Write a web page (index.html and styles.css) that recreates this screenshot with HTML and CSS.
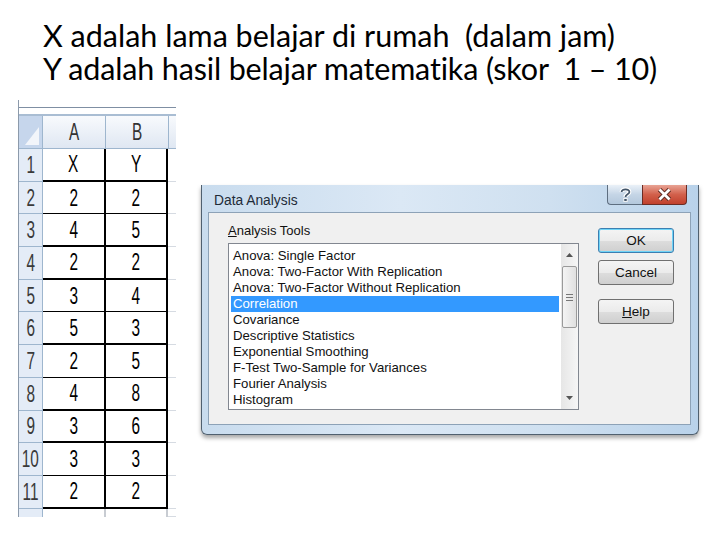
FILE: index.html
```html
<!DOCTYPE html>
<html>
<head>
<meta charset="utf-8">
<link rel="stylesheet" href="styles.css">
</head>
<body>
<div class="page">
  <div class="title">
    <div>X adalah lama belajar di rumah&nbsp; (dalam jam)</div>
    <div>Y adalah hasil belajar matematika (skor&nbsp; 1 – 10)</div>
  </div>
  <div class="main">
    <div class="sheet">
      <div class="sheet-top"></div>
      <div class="row head">
        <div class="rh corner"><span class="tri"></span></div>
        <div class="ch"><span class="g">A</span></div>
        <div class="ch"><span class="g">B</span></div>
        <div class="cc"></div>
      </div>
      <div class="row thick"><div class="rh"><span class="g">1</span></div><div class="c a"><span class="g">X</span></div><div class="c b"><span class="g">Y</span></div><div class="cc"></div></div>
      <div class="row thin"><div class="rh"><span class="g">2</span></div><div class="c a"><span class="g">2</span></div><div class="c b"><span class="g">2</span></div><div class="cc"></div></div>
      <div class="row thick"><div class="rh"><span class="g">3</span></div><div class="c a"><span class="g">4</span></div><div class="c b"><span class="g">5</span></div><div class="cc"></div></div>
      <div class="row thick"><div class="rh"><span class="g">4</span></div><div class="c a"><span class="g">2</span></div><div class="c b"><span class="g">2</span></div><div class="cc"></div></div>
      <div class="row thin"><div class="rh"><span class="g">5</span></div><div class="c a"><span class="g">3</span></div><div class="c b"><span class="g">4</span></div><div class="cc"></div></div>
      <div class="row thick"><div class="rh"><span class="g">6</span></div><div class="c a"><span class="g">5</span></div><div class="c b"><span class="g">3</span></div><div class="cc"></div></div>
      <div class="row thin"><div class="rh"><span class="g">7</span></div><div class="c a"><span class="g">2</span></div><div class="c b"><span class="g">5</span></div><div class="cc"></div></div>
      <div class="row thick"><div class="rh"><span class="g">8</span></div><div class="c a"><span class="g">4</span></div><div class="c b"><span class="g">8</span></div><div class="cc"></div></div>
      <div class="row thick"><div class="rh"><span class="g">9</span></div><div class="c a"><span class="g">3</span></div><div class="c b"><span class="g">6</span></div><div class="cc"></div></div>
      <div class="row thin"><div class="rh"><span class="g">10</span></div><div class="c a"><span class="g">3</span></div><div class="c b"><span class="g">3</span></div><div class="cc"></div></div>
      <div class="row thick"><div class="rh"><span class="g">11</span></div><div class="c a"><span class="g">2</span></div><div class="c b"><span class="g">2</span></div><div class="cc"></div></div>
      <div class="row stub"><div class="rh"></div><div class="c a n"></div><div class="c b n"></div><div class="cc"></div></div>
    </div>

    <div class="dialog">
      <div class="titlebar">
        <div class="dtitle">Data Analysis</div>
        <div class="caps">
          <div class="cap help"><svg width="13" height="16" viewBox="0 0 13 16"><path d="M2.6 5 C2.6 1.4 10.4 1.4 10.4 5 C10.4 7.4 6.5 7.2 6.5 10" fill="none" stroke="#fff" stroke-width="4"/><path d="M2.6 5 C2.6 1.4 10.4 1.4 10.4 5 C10.4 7.4 6.5 7.2 6.5 10" fill="none" stroke="#44566a" stroke-width="1.8"/><rect x="4.8" y="11.4" width="3.4" height="3" fill="#44566a" stroke="#fff" stroke-width="0.9"/></svg></div>
          <div class="cap close"><svg width="15" height="13" viewBox="0 0 15 13"><path d="M2.5 1.5 L12.5 11.5 M12.5 1.5 L2.5 11.5" stroke="#5b2a22" stroke-width="4.6"/><path d="M2.5 1.5 L12.5 11.5 M12.5 1.5 L2.5 11.5" stroke="#fff" stroke-width="2.8"/></svg></div>
        </div>
      </div>
      <div class="panel">
        <div class="left">
          <div class="label"><u>A</u>nalysis Tools</div>
          <div class="listbox">
            <div class="items">
              <div class="item">Anova: Single Factor</div>
              <div class="item">Anova: Two-Factor With Replication</div>
              <div class="item">Anova: Two-Factor Without Replication</div>
              <div class="item sel">Correlation</div>
              <div class="item">Covariance</div>
              <div class="item">Descriptive Statistics</div>
              <div class="item">Exponential Smoothing</div>
              <div class="item">F-Test Two-Sample for Variances</div>
              <div class="item">Fourier Analysis</div>
              <div class="item">Histogram</div>
            </div>
            <div class="scroll">
              <div class="arrow"><svg width="7" height="4" viewBox="0 0 7 4"><path d="M0 4 L3.5 0 L7 4Z" fill="#555"/></svg></div>
              <div class="thumb"><span class="grip"></span><span class="grip"></span><span class="grip"></span></div>
              <div class="track"></div>
              <div class="arrow"><svg width="7" height="4" viewBox="0 0 7 4"><path d="M0 0 L3.5 4 L7 0Z" fill="#555"/></svg></div>
            </div>
          </div>
        </div>
        <div class="buttons">
          <div class="btn ok">OK</div>
          <div class="btn">Cancel</div>
          <div class="btn help-btn"><u>H</u>elp</div>
        </div>
      </div>
    </div>
  </div>
</div>
</body>
</html>
```
FILE: styles.css
```css
html, body {
  margin: 0;
  padding: 0;
  background: #fff;
}
.page {
  width: 720px;
  height: 540px;
  overflow: hidden;
  position: relative;
}
.title {
  padding: 19px 0 0 43px;
  font-family: "Lato", "Liberation Sans", sans-serif;
  font-size: 30.5px;
  line-height: 33px;
  color: #000;
  height: 81px;
  font-variant-ligatures: none;
  white-space: nowrap;
}
.title div:last-child { letter-spacing: -0.15px; }
.main {
  display: flex;
  align-items: flex-start;
}
.sheet {
  margin-left: 18px;
  width: 157px;
  border-left: 1px solid #8c9aab;
  font-family: "Liberation Sans", sans-serif;
}
.sheet-top {
  height: 7px;
  border-bottom: 1px solid #7f8fa3;
  margin-bottom: 6px;
}
.row {
  display: flex;
  height: 32.7px;
  box-sizing: border-box;
}
.row.head {
  height: 35px;
  border-top: 2px solid #a9bdd3;
}
.row.stub { height: 8px; }
.rh {
  width: 24px;
  flex: none;
  background: #e4ecf7;
  border-right: 1px solid #9eb6ce;
  border-bottom: 1px solid #9eb6ce;
  display: flex;
  align-items: center;
  justify-content: center;
  color: #3a3a3a;
  box-sizing: border-box;
}
.row.stub .rh { border-bottom: none; }
.corner {
  background: #c6d6ec;
  position: relative;
}
.tri {
  position: absolute;
  right: 3px;
  bottom: 3px;
  width: 0;
  height: 0;
  border-left: 14px solid transparent;
  border-bottom: 18px solid #f2f5fa;
}
.ch {
  width: 63px;
  flex: none;
  box-sizing: border-box;
  background: linear-gradient(#f8fafd, #dfe7f2);
  border-right: 1px solid #9eb6ce;
  border-bottom: 1px solid #9eb6ce;
  display: flex;
  align-items: center;
  justify-content: center;
  color: #333;
}
.row.head .cc {
  background: linear-gradient(#f8fafd, #dfe7f2);
  border-bottom: 1px solid #9eb6ce;
}
.c {
  width: 63px;
  flex: none;
  box-sizing: border-box;
  border-right: 2px solid #000;
  display: flex;
  align-items: center;
  justify-content: center;
  color: #000;
}
.c.b { width: 62px; border-right-width: 2px; }
.row.thick .c { border-bottom: 2.5px solid #000; }
.row.thin .c { border-bottom: 1.2px solid #000; }
.c.n { border-right-color: #c8ccd2; }
.cc {
  flex: 1;
  border-bottom: 1px solid #d6dbe2;
  box-sizing: border-box;
}
.g {
  display: inline-block;
  font-size: 24px;
  transform: scaleX(0.64);
  line-height: 1;
}

/* dialog */
.dialog {
  margin-left: 25px;
  margin-top: 85px;
  width: 498px;
  height: 250px;
  box-sizing: border-box;
  background: linear-gradient(90deg, #c9dcee 0%, #dbe8f5 40%, #cfe0f0 70%, #b9d2ea 100%);
  border: 1px solid #50606f;
  border-top: none;
  border-radius: 0 0 6px 6px;
  box-shadow: 0 3px 4px rgba(0,0,0,0.35);
  font-family: "Liberation Sans", sans-serif;
  display: flex;
  flex-direction: column;
}
.titlebar {
  height: 27px;
  display: flex;
  justify-content: space-between;
  align-items: flex-start;
  padding: 0 11px 0 12px;
}
.dtitle {
  font-size: 13.8px;
  color: #1e2b38;
  margin-top: 8px;
}
.caps {
  display: flex;
}
.cap {
  height: 20px;
  display: flex;
  align-items: center;
  justify-content: center;
  box-sizing: border-box;
  border: 1px solid #5e6e80;
  border-top: none;
}
.cap.help {
  width: 35px;
  background: linear-gradient(#eaf1f8, #c5d5e6 50%, #b4c8dc);
  border-radius: 0 0 0 4px;
  border-right: none;
}
.cap.close {
  width: 45px;
  background: linear-gradient(#e8a394, #d2604b 50%, #c1402c);
  border-radius: 0 0 4px 0;
  border-color: #6b2c24;
}
.panel {
  flex: 1;
  margin: 0 7px 9px 6px;
  background: #f0f0f0;
  border: 1px solid #8da2b7;
  display: flex;
  box-sizing: border-box;
}
.left {
  padding: 10px 0 0 19px;
  width: 370px;
  box-sizing: border-box;
}
.label {
  font-size: 13px;
  color: #111;
  height: 20px;
}
.listbox {
  width: 351px;
  height: 167px;
  box-sizing: border-box;
  border: 1px solid #828790;
  background: #fff;
  display: flex;
}
.items {
  flex: 1;
  padding: 4px 2px 0 2px;
}
.item {
  height: 16px;
  line-height: 16px;
  font-size: 13.2px;
  color: #111;
  padding-left: 2px;
  white-space: nowrap;
}
.item.sel {
  background: #3399ff;
  color: #fff;
}
.scroll {
  width: 17px;
  display: flex;
  flex-direction: column;
  background: linear-gradient(90deg, #e6e6e6, #f6f6f6);
}
.arrow {
  height: 22px;
  display: flex;
  align-items: center;
  justify-content: center;
}
.thumb {
  height: 62px;
  margin: 0 1px;
  box-sizing: border-box;
  border: 1px solid #9a9a9a;
  border-radius: 2px;
  background: linear-gradient(90deg, #f4f4f4, #e0e0e0);
  display: flex;
  flex-direction: column;
  align-items: center;
  justify-content: center;
  gap: 2px;
}
.grip {
  width: 7px;
  height: 1px;
  background: #777;
}
.track { flex: 1; }
.buttons {
  display: flex;
  flex-direction: column;
  padding-top: 15px;
  margin-left: 19px;
}
.btn {
  width: 76px;
  height: 25px;
  box-sizing: border-box;
  border: 1px solid #707070;
  border-radius: 3px;
  background: linear-gradient(#f4f4f4 0%, #ebebeb 50%, #dddddd 51%, #cfcfcf 100%);
  font-size: 13.5px;
  color: #111;
  display: flex;
  align-items: center;
  justify-content: center;
  margin-bottom: 7px;
}
.btn.ok {
  border-color: #3c7fb1;
  box-shadow: inset 0 0 0 1px #6fd4f7;
}
.btn.help-btn {
  margin-top: 7px;
}
```
